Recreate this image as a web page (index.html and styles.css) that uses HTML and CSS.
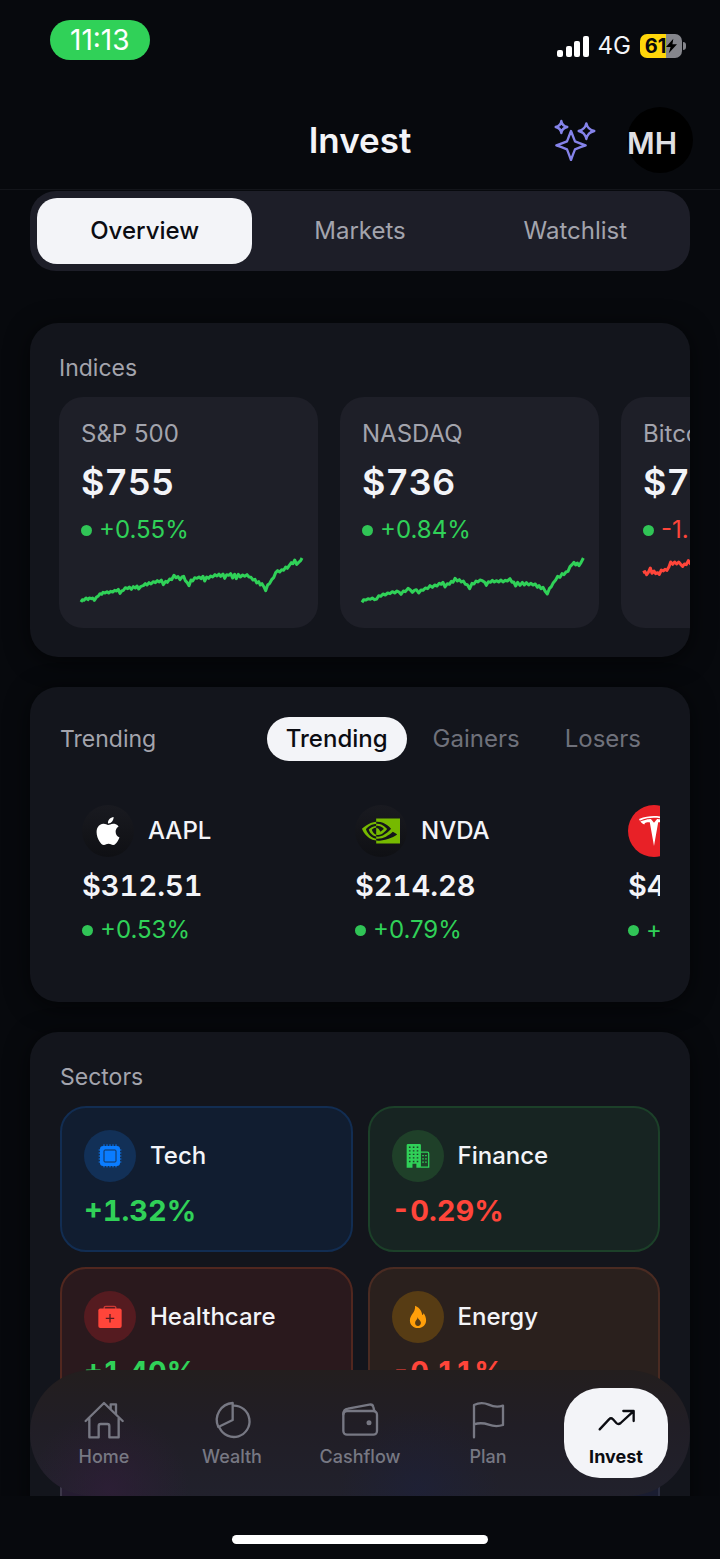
FILE: index.html
```
<!DOCTYPE html>
<html lang="en">
<head>
    <meta charset="UTF-8">
    <meta name="viewport" content="width=device-width, initial-scale=1.0">
    <title>Invest</title>
    <link rel="stylesheet" href="styles.css">
</head>
<body>

<div class="app">

    <header class="header">
        <!-- Status bar -->
        <div class="status-bar">
            <span class="clock">11:13</span>
            <div class="status-right">
                <svg class="signal" viewBox="0 0 32 21" aria-hidden="true">
                    <rect x="0" y="14" width="6" height="7" rx="2"/>
                    <rect x="9" y="10" width="6" height="11" rx="2"/>
                    <rect x="17" y="5" width="6" height="16" rx="2"/>
                    <rect x="26" y="0" width="6" height="21" rx="2"/>
                </svg>
                <span class="network">4G</span>
                <span class="battery">
                    <span>61</span>
                    <svg viewBox="0 0 12 16" aria-hidden="true"><path d="M8 0L0 9h5L3 16l9-10H7z"/></svg>
                </span>
            </div>
        </div>

        <div class="title-bar">
            <h1>Invest</h1>
            <div class="title-actions">
                <button type="button" class="icon-btn" aria-label="Assistant">
                    <svg viewBox="105 323 126 126" aria-hidden="true">
                        <path d="M156 359Q162 375 168 390Q185 397 200 402Q185 407 168 414Q162 429 156 446Q150 429 144 414Q127 407 112 402Q127 397 144 390Q150 375 156 359Z"/>
                        <path d="M127 329Q129 344 145 347Q129 350 127 365Q125 350 110 347Q125 344 127 329Z"/>
                        <path d="M202 336Q206 355 226 359Q206 363 202 383Q198 363 179 359Q198 355 202 336Z"/>
                    </svg>
                </button>
                <button type="button" class="avatar">MH</button>
            </div>
        </div>
    </header>

    <main class="content">

        <div class="tabs">
            <button type="button" class="tab active">Overview</button>
            <button type="button" class="tab">Markets</button>
            <button type="button" class="tab">Watchlist</button>
        </div>

        <!-- Indices -->
        <section class="card indices">
            <h2>Indices</h2>
            <div class="index-list">
                <article class="index-card">
                    <h3>S&amp;P 500</h3>
                    <p class="index-price">$755</p>
                    <p class="change up"><i class="dot"></i>+0.55%</p>
                    <svg class="spark up" viewBox="95 498 666 150" aria-hidden="true">
                        <polyline points="95,636 99,629 104,631 110,624 116,629 120,624 126,626 130,624 135,631 141,622 147,618 152,611 157,613 161,607 167,609 173,605 178,609 184,604 190,606 196,601 202,603 207,598 212,610 217,603 222,601 228,593 235,596 240,591 246,598 252,590 258,594 263,588 268,597 275,589 282,587 288,581 293,585 299,578 305,582 312,575 318,578 324,572 330,576 336,570 342,584 349,574 354,577 361,567 367,569 374,556 380,563 386,560 392,569 398,561 403,559 408,572 413,577 419,587 425,570 430,573 436,563 443,565 449,561 455,566 461,559 466,573 472,561 478,565 484,558 490,561 497,554 503,558 509,552 514,559 521,552 526,565 532,554 538,556 544,551 550,564 556,553 561,566 567,553 573,561 580,555 586,559 593,554 599,561 605,562 611,570 617,568 622,579 628,575 633,585 638,581 644,591 649,602 655,585 661,580 667,569 673,563 679,548 685,542 691,546 697,539 703,541 709,531 714,535 720,526 726,518 731,521 736,510 742,523 748,517 754,512 758,504"/>
                    </svg>
                </article>
                <article class="index-card">
                    <h3>NASDAQ</h3>
                    <p class="index-price">$736</p>
                    <p class="change up"><i class="dot"></i>+0.84%</p>
                    <svg class="spark up" viewBox="95 498 666 150" aria-hidden="true">
                        <polyline points="95,637 100,629 107,630 113,626 120,628 126,624 133,629 139,627 145,617 151,619 158,612 165,615 172,609 179,611 186,605 193,609 200,603 206,606 212,613 219,603 225,605 233,595 240,600 246,607 252,601 258,599 265,609 272,600 278,601 285,594 292,596 299,587 306,592 313,585 320,588 327,580 333,583 338,577 344,591 351,581 357,583 363,574 368,577 374,565 381,573 387,569 393,576 399,573 405,583 411,584 418,596 425,580 431,582 437,573 443,576 449,570 456,572 463,577 468,586 474,575 480,577 486,571 492,576 498,572 505,576 512,570 518,576 525,571 531,573 539,566 545,577 550,576 556,588 562,577 569,586 576,577 582,585 588,578 595,585 602,580 608,585 615,582 621,592 626,587 632,596 638,592 644,603 651,612 657,596 663,590 669,578 676,570 682,559 689,562 695,551 701,554 707,546 713,544 719,530 725,524 731,517 736,525 741,519 746,527 752,518 759,504"/>
                    </svg>
                </article>
                <article class="index-card">
                    <h3>Bitcoin</h3>
                    <p class="index-price">$7</p>
                    <p class="change down"><i class="dot"></i>-1.</p>
                    <svg class="spark down" viewBox="95 498 666 150" aria-hidden="true">
                        <polyline points="95,548 101,545 106,554 111,547 117,534 122,550 128,543 133,551 139,548 144,553 150,540 156,543 161,538 167,541 173,530 178,516 184,523 190,516 196,522 202,516 208,523 214,529 219,522 225,524 231,512 237,521 243,511 249,517"/>
                    </svg>
                </article>
            </div>
        </section>

        <!-- Trending -->
        <section class="card">
            <div class="trending-head">
                <h2>Trending</h2>
                <div class="pills">
                    <button type="button" class="pill active">Trending</button>
                    <button type="button" class="pill">Gainers</button>
                    <button type="button" class="pill">Losers</button>
                </div>
            </div>
            <div class="stock-list">
                <article class="stock">
                    <div class="stock-head">
                        <span class="logo">
                            <svg class="apple" viewBox="0 0 24 24" aria-hidden="true"><path d="M12.152 6.896c-.948 0-2.415-1.078-3.96-1.04-2.04.027-3.91 1.183-4.961 3.014-2.117 3.675-.546 9.103 1.519 12.09 1.013 1.454 2.208 3.09 3.792 3.039 1.52-.065 2.09-.987 3.935-.987 1.831 0 2.35.987 3.96.948 1.637-.026 2.676-1.48 3.676-2.948 1.156-1.688 1.636-3.325 1.662-3.415-.039-.013-3.182-1.221-3.22-4.857-.026-3.04 2.48-4.494 2.597-4.559-1.429-2.09-3.623-2.324-4.39-2.376-2-.156-3.675 1.09-4.61 1.09zM15.53 3.83c.843-1.012 1.4-2.427 1.245-3.83-1.207.052-2.662.805-3.532 1.818-.78.896-1.454 2.338-1.273 3.714 1.338.104 2.715-.688 3.559-1.701"/></svg>
                        </span>
                        <h3>AAPL</h3>
                    </div>
                    <p class="stock-price">$312.51</p>
                    <p class="change up"><i class="dot"></i>+0.53%</p>
                </article>
                <article class="stock">
                    <div class="stock-head">
                        <span class="logo">
                            <svg class="nvidia" viewBox="0 0 24 24" aria-hidden="true"><path d="M8.948 8.798v-1.43a6.7 6.7 0 0 1 .424-.018c3.922-.124 6.493 3.374 6.493 3.374s-2.774 3.851-5.75 3.851c-.398 0-.787-.062-1.158-.185v-4.346c1.528.185 1.837.857 2.747 2.385l2.04-1.714s-1.492-1.952-4-1.952a6.016 6.016 0 0 0-.796.035m0-4.735v2.138l.424-.027c5.45-.185 9.01 4.47 9.01 4.47s-4.08 4.964-8.33 4.964c-.37 0-.733-.035-1.095-.097v1.325c.3.035.61.062.91.062 3.957 0 6.82-2.023 9.593-4.408.459.371 2.34 1.263 2.73 1.652-2.633 2.208-8.772 3.984-12.253 3.984-.335 0-.653-.018-.971-.053v1.864H24V4.063zm0 10.326v1.131c-3.657-.654-4.673-4.46-4.673-4.46s1.758-1.944 4.673-2.262v1.237H8.94c-1.528-.186-2.73 1.245-2.73 1.245s.68 2.412 2.739 3.11M2.456 10.9s2.164-3.197 6.5-3.533V6.201C4.153 6.59 0 10.653 0 10.653s2.35 6.802 8.948 7.42v-1.237c-4.84-.6-6.492-5.936-6.492-5.936z"/></svg>
                        </span>
                        <h3>NVDA</h3>
                    </div>
                    <p class="stock-price">$214.28</p>
                    <p class="change up"><i class="dot"></i>+0.79%</p>
                </article>
                <article class="stock">
                    <div class="stock-head">
                        <span class="logo logo-red">
                            <svg class="tesla" viewBox="0 0 24 24" aria-label="Tesla"><path d="M12 5.362l2.475-3.026s4.245.09 8.471 2.054c-1.082 1.636-3.231 2.438-3.231 2.438-.146-1.439-1.154-1.79-4.354-1.79L12 24 8.619 5.034c-3.18 0-4.188.354-4.335 1.792 0 0-2.146-.795-3.229-2.43C5.28 2.431 9.525 2.34 9.525 2.34L12 5.362zM12 1.463c3.415-.03 7.326.528 11.328 2.28.535-.968.672-1.395.672-1.395C19.625.612 15.528.015 12 0 8.472.015 4.375.61 0 2.349c0 0 .195.525.672 1.396C4.674 1.989 8.585 1.435 12 1.46z"/></svg>
                        </span>
                    </div>
                    <p class="stock-price">$4</p>
                    <p class="change up"><i class="dot"></i>+</p>
                </article>
            </div>
        </section>

        <!-- Sectors -->
        <section class="card">
            <h2>Sectors</h2>
            <div class="sector-grid">
                <article class="sector tech">
                    <div class="sector-head">
                        <span class="sector-icon">
                            <svg viewBox="201 164 72 72" aria-hidden="true">
                                <path stroke="currentColor" stroke-width="3" d="M219 165v69M228 165v69M237 165v69M246 165v69M255 165v69M203 182h68M203 191h68M203 200h68M203 209h68M203 218h68"/>
                                <rect x="207" y="170" width="60" height="60" rx="9" fill="currentColor"/>
                                <rect x="219" y="182" width="36" height="36" rx="3" fill="none" stroke="#123057" stroke-width="3"/>
                            </svg>
                        </span>
                        <h3>Tech</h3>
                    </div>
                    <p class="sector-change up">+1.32%</p>
                </article>
                <article class="sector finance">
                    <div class="sector-head">
                        <span class="sector-icon">
                            <svg viewBox="135 163 74 74" aria-hidden="true">
                                <path fill="currentColor" d="M141 163h36q4 0 4 4v69h-14v-12h-12v12h-18v-69q0-4 4-4z"/>
                                <path fill="none" stroke="currentColor" stroke-width="4" d="M181 188h20q4 0 4 4v42h-24"/>
                                <path fill="none" stroke="#1f4029" stroke-width="4" stroke-dasharray="5 7" d="M144 173h34M144 184h34M144 195h34M144 206h34M144 217h34"/>
                                <path fill="none" stroke="currentColor" stroke-width="4" stroke-dasharray="5 4" d="M185 199h16M185 209h16M185 219h16"/>
                            </svg>
                        </span>
                        <h3>Finance</h3>
                    </div>
                    <p class="sector-change down">-0.29%</p>
                </article>
                <article class="sector health">
                    <div class="sector-head">
                        <span class="sector-icon">
                            <svg viewBox="200 646 74 74" aria-hidden="true">
                                <path fill="none" stroke="currentColor" stroke-width="4" opacity=".7" d="M219 658v-4q0-4 5-4h26q5 0 5 4v4"/>
                                <rect x="201" y="657" width="72" height="60" rx="6" fill="currentColor"/>
                                <path stroke="#551b20" stroke-width="4" d="M237 674v26M224 687h26"/>
                            </svg>
                        </span>
                        <h3>Healthcare</h3>
                    </div>
                    <p class="sector-change up">+1.40%</p>
                </article>
                <article class="sector energy">
                    <div class="sector-head">
                        <span class="sector-icon">
                            <svg viewBox="135 646 74 74" aria-hidden="true">
                                <path fill="currentColor" d="M163 648C180 655 184 668 185 677C188 677 189 674 189 671C194 678 197 686 197 693C197 708 186 717 172 717C157 717 147 707 147 693C147 676 165 669 163 648Z"/>
                                <path fill="#573c14" d="M171 683C172 691 181 693 181 701C181 707 177 711 172 711C166 711 163 707 163 701C163 694 171 691 171 683Z"/>
                            </svg>
                        </span>
                        <h3>Energy</h3>
                    </div>
                    <p class="sector-change down">-0.11%</p>
                </article>
                <article class="sector purple"></article>
                <article class="sector blue"></article>
            </div>
        </section>

        <!-- Floating navigation -->
        <nav class="bottom-nav">
            <a href="#home">
                <svg viewBox="254 121 120 120" aria-hidden="true"><path d="M259 184L314 130L370 184M334 148V134H350V164M270 176V233H298V199Q298 193 304 193H324Q330 193 330 199V233H358V176"/></svg>
                Home
            </a>
            <a href="#wealth">
                <svg viewBox="636 121 120 120" aria-hidden="true"><path d="M698 130V181L655 202A51 51 0 0 1 698 130ZM700 138A47 47 0 1 1 659 205"/></svg>
                Wealth
            </a>
            <a href="#cashflow">
                <svg viewBox="1018 121 120 120" aria-hidden="true"><rect x="1028" y="154" width="101" height="71" rx="11"/><path d="M1028 164Q1028 149 1042 147L1106 135Q1116 133 1118 142L1121 154"/><circle cx="1105" cy="189" r="4"/></svg>
                Cashflow
            </a>
            <a href="#plan">
                <svg viewBox="324 121 120 120" aria-hidden="true"><path d="M342 233V136Q364 125 386 135T429 138V196Q408 203 386 195T342 194"/></svg>
                Plan
            </a>
            <a href="#invest" class="active">
                <svg viewBox="705 121 120 120" aria-hidden="true"><path d="M716 209L744 179Q750 173 756 179L766 190Q772 196 779 190L817 155M787 154H818V184"/></svg>
                Invest
            </a>
        </nav>
    </main>

    <footer class="home-area"><span class="home-indicator"></span></footer>

</div>

</body>
</html>
```
FILE: styles.css
```
* {
    box-sizing: border-box;
}

body {
    margin: 0;
    background-color: #07090d;
    color: #f3f4f8;
    font-family: Inter, "Liberation Sans", sans-serif;
    font-size: 24px;
    line-height: 30px;
}

h1, h2, h3, p {
    margin: 0;
}

button {
    border: none;
    padding: 0;
    background: none;
    color: inherit;
    font: inherit;
}

.app {
    display: flex;
    flex-direction: column;
    height: 100vh;
}

/* Header */
.header {
    padding-top: 20px;
    border-bottom: 1px solid #13151a;
}

.status-bar {
    display: flex;
    justify-content: space-between;
    align-items: flex-end;
    padding: 0 38px 0 50px;
}

.clock {
    padding: 0 20px;
    border-radius: 20px;
    background-color: #30d158;
    color: #fff;
    font-size: 28px;
    line-height: 40px;
}

.status-right {
    display: flex;
    align-items: center;
    gap: 9px;
    height: 28px;
}

.signal {
    width: 32px;
    height: 21px;
    fill: #fff;
}

.battery {
    position: relative;
    display: flex;
    align-items: center;
    justify-content: center;
    width: 42px;
    height: 24px;
    border-radius: 7px;
    background: linear-gradient(90deg, #ffd60a 61%, #85868c 61%);
    color: #07090d;
    font-size: 20px;
    font-weight: 700;
}

.battery::after {
    content: "";
    position: absolute;
    right: -4px;
    width: 3px;
    height: 8px;
    border-radius: 0 3px 3px 0;
    background-color: #85868c;
}

.battery svg {
    width: 11px;
    height: 16px;
}

.title-bar {
    display: grid;
    grid-template-columns: 1fr auto 1fr;
    align-items: center;
    height: 99px;
    margin-top: 30px;
    padding: 0 27px;
}

h1 {
    grid-column: 2;
    font-size: 35px;
    font-weight: 600;
    line-height: 44px;
}

.title-actions {
    display: flex;
    justify-content: flex-end;
    align-items: center;
    gap: 31px;
}

.icon-btn svg {
    display: block;
    width: 42px;
    height: 42px;
    fill: none;
    stroke: #8583ea;
    stroke-width: 7;
    stroke-linejoin: round;
}

.avatar {
    width: 66px;
    height: 66px;
    padding-top: 6px;
    border-radius: 50%;
    background-color: #000;
    color: #dfdfe3;
    font-size: 30px;
    font-weight: 600;
    text-align: left;
}

/* Content */
.content {
    position: relative;
    flex: 1;
    min-height: 0;
    padding: 1px 30px 0;
    overflow: hidden;
}

.tabs {
    display: grid;
    grid-template-columns: repeat(3, 1fr);
    margin-bottom: 52px;
    padding: 7px;
    border-radius: 26px;
    background-color: #1d1e28;
}

.tab {
    height: 66px;
    border-radius: 20px;
    color: #a3a4ad;
}

.tab.active {
    background-color: #f3f4f8;
    color: #0b0c12;
    font-weight: 500;
}

.card {
    margin-bottom: 30px;
    padding: 30px 30px 29px;
    border-radius: 28px;
    background-color: #13151c;
    box-shadow: 0 4px 24px rgba(0, 0, 0, .6);
    overflow: hidden;
}

h2 {
    color: #a3a4ad;
    font-size: 23px;
    font-weight: 400;
}

h3 {
    font-size: 24px;
    font-weight: 500;
}

.up {
    color: #30d158;
}

.down {
    color: #ff453a;
}

/* Indices */
.indices {
    padding-right: 0;
    padding-left: 29px;
}

.index-list {
    display: flex;
    gap: 22px;
    margin-top: 14px;
    overflow: hidden;
}

.index-card {
    display: flex;
    flex: 0 0 259px;
    flex-direction: column;
    gap: 11px;
    padding: 22px 15px 22px 22px;
    border-radius: 24px;
    background-color: #1e1f28;
}

.index-card h3 {
    color: #a3a4ad;
    font-weight: 400;
}

.index-price {
    font-size: 36px;
    font-variant-numeric: tabular-nums;
    font-weight: 600;
    line-height: 44px;
}

.change {
    display: flex;
    align-items: center;
    gap: 7px;
}

.dot {
    width: 11px;
    height: 11px;
    border-radius: 50%;
    background-color: #30c456;
}

.spark {
    height: 50px;
    fill: none;
    stroke: currentColor;
    stroke-width: 9;
    stroke-linejoin: round;
    overflow: visible;
}

/* Trending */
.trending-head {
    display: flex;
    justify-content: space-between;
    align-items: center;
}

.pills {
    display: flex;
    gap: 7px;
}

.pill {
    height: 44px;
    padding: 0 19px;
    border-radius: 22px;
    color: #6f717b;
}

.pill.active {
    background-color: #f3f4f8;
    color: #0b0c12;
    font-weight: 500;
}

.stock-list {
    display: flex;
    gap: 15px;
    margin-top: 22px;
    overflow: hidden;
}

.stock {
    display: flex;
    flex: 0 0 258px;
    flex-direction: column;
    gap: 11px;
    padding: 22px 22px 28px;
}

.stock-head,
.sector-head {
    display: flex;
    align-items: center;
    gap: 14px;
}

.logo {
    display: grid;
    place-items: center;
    width: 52px;
    height: 52px;
    border-radius: 50%;
    background: linear-gradient(#191a20, #0f1014);
}

.logo-red {
    background: #e82127;
}

.apple {
    width: 28px;
    height: 28px;
    fill: #fff;
}

.nvidia {
    width: 38px;
    height: 38px;
    fill: #76b900;
}

.tesla {
    width: 30px;
    height: 30px;
    fill: #fff;
}

.stock-price {
    font-size: 29px;
    font-variant-numeric: tabular-nums;
    font-weight: 600;
    line-height: 36px;
}

/* Sectors */
.sector-grid {
    display: grid;
    grid-template-columns: 1fr 1fr;
    gap: 15px;
    margin-top: 14px;
}

.sector {
    min-height: 146px;
    padding: 22px;
    border: 2px solid;
    border-radius: 26px;
}

.sector-icon {
    display: grid;
    place-items: center;
    width: 52px;
    height: 52px;
    border-radius: 50%;
}

.sector-icon svg {
    width: 24px;
    height: 24px;
}

.sector-change {
    margin-top: 12px;
    font-size: 29px;
    font-variant-numeric: tabular-nums;
    font-weight: 700;
    line-height: 34px;
}

.tech {
    border-color: #122d52;
    background-color: #111d30;
}

.tech .sector-icon {
    background-color: #123057;
    color: #0a7cff;
}

.finance {
    border-color: #1c4029;
    background-color: #172422;
}

.finance .sector-icon {
    background-color: #1f4029;
    color: #30d158;
}

.health {
    border-color: #51271f;
    background-color: #2a191d;
}

.health .sector-icon {
    background-color: #551b20;
    color: #ff453a;
}

.energy {
    border-color: #4a2b22;
    background-color: #2a201d;
}

.energy .sector-icon {
    background-color: #573c14;
    color: #ff9f0a;
}

.purple {
    border-color: #3b3648;
    background-color: #251c31;
}

.blue {
    border-color: #2b2e42;
    background-color: #1a1d31;
}

/* Bottom navigation */
.bottom-nav {
    position: absolute;
    right: 30px;
    bottom: 0;
    left: 30px;
    display: grid;
    grid-template-columns: repeat(5, 1fr);
    gap: 24px;
    padding: 18px 22px;
    border-radius: 62px;
    background:
        radial-gradient(circle at 12% 95%, rgba(54, 28, 62, .5), transparent 80px),
        radial-gradient(circle at 59% 95%, rgba(28, 32, 62, .5), transparent 80px),
        linear-gradient(#231e1e, #211e26 45%, #21212c);
}

.bottom-nav a {
    display: flex;
    flex-direction: column;
    align-items: center;
    gap: 6px;
    padding: 12px 0 10px;
    border-radius: 36px;
    color: #777883;
    font-size: 18px;
    font-weight: 500;
    line-height: 22px;
    text-decoration: none;
}

.bottom-nav a.active {
    background-color: #f3f4f8;
    color: #0b0c12;
    font-weight: 700;
}

.bottom-nav svg {
    width: 40px;
    height: 40px;
    fill: none;
    stroke: currentColor;
    stroke-width: 7;
    stroke-linecap: round;
    stroke-linejoin: round;
}

.home-area {
    display: flex;
    justify-content: center;
    padding: 39px 0 15px;
}

.home-indicator {
    width: 256px;
    height: 9px;
    border-radius: 5px;
    background-color: #fff;
}
```
